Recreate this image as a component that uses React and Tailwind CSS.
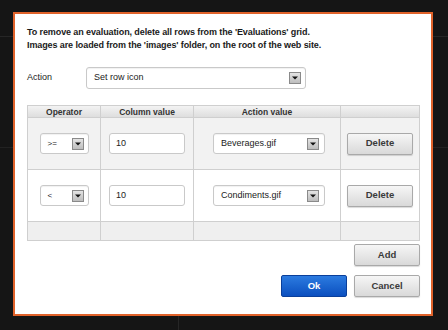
import React from "react";

const font = { fontFamily: "Arial, 'Liberation Sans', sans-serif" };

function DropBtn() {
  return (
    <span className="flex h-[12px] w-[12px] items-center justify-center border border-[#8a8a8a] bg-gradient-to-b from-[#e4e4e4] to-[#bdbdbd]">
      <svg width="6" height="4" viewBox="0 0 6 4">
        <path d="M0 0.5 L6 0.5 L3 3.5 Z" fill="#111" />
      </svg>
    </span>
  );
}

function Select({ text, className, textClass = "text-[9px]" }) {
  return (
    <div
      className={
        "flex items-center justify-between rounded-[3px] border border-[#c9c9c9] bg-white pl-[7px] pr-[4px] shadow-[inset_0_1px_1px_rgba(0,0,0,0.06)] " +
        className
      }
    >
      <span className={"text-[#222] " + textClass}>{text}</span>
      <DropBtn />
    </div>
  );
}

function Btn({ children, className }) {
  return (
    <div
      className={
        "flex items-center justify-center rounded-[2px] border border-[#a9a9a9] bg-gradient-to-b from-[#f6f6f6] to-[#d9d9d9] text-[9.5px] font-bold text-[#3a3a3a] shadow-[0_1px_1px_rgba(0,0,0,0.15)] " +
        className
      }
    >
      {children}
    </div>
  );
}

function Row({ op, value, action, bg }) {
  return (
    <div className={"flex h-[52px] border-b border-[#cfcfcf] " + bg}>
      <div className="flex w-[73px] items-center justify-center border-r border-[#cfcfcf]">
        <Select text={op} className="h-[21px] w-[49px] pr-[4px]" textClass="text-[8px]" />
      </div>
      <div className="flex w-[93px] items-center justify-center border-r border-[#cfcfcf]">
        <div className="flex h-[21px] w-[76px] items-center rounded-[3px] border border-[#c9c9c9] bg-white pl-[6px] text-[9px] text-[#222]">
          {value}
        </div>
      </div>
      <div className="flex w-[147px] items-center justify-center border-r border-[#cfcfcf] pl-[4px]">
        <Select text={action} className="h-[21px] w-[112px] pr-[5px]" />
      </div>
      <div className="flex flex-1 items-center justify-center">
        <Btn className="h-[22px] w-[66px]">Delete</Btn>
      </div>
    </div>
  );
}

export default function App() {
  return (
    <div className="relative h-[330px] w-[448px] overflow-hidden bg-[#151515]" style={font}>
      <div className="h-[37px] border-b border-[#262626]" />
      <div className="h-[111px] border-b border-[#222]" />
      <div className="absolute bottom-0 left-[178px] h-[14px] w-px bg-[#262626]" />
      <div className="absolute left-[13px] top-[12px] flex h-[304px] w-[420px] flex-col border-2 border-[#e0622a] bg-white pl-[12px] pr-[11px] pt-[12px]">
        <div className="text-[9px] font-bold leading-[13px] tracking-[-0.1px] text-[#1a1a1a]">
          <p>To remove an evaluation, delete all rows from the 'Evaluations' grid.</p>
          <p>Images are loaded from the 'images' folder, on the root of the web site.</p>
        </div>
        <div className="mt-[15px] flex h-[22px] items-center">
          <span className="w-[59px] text-[9px] text-[#222]">Action</span>
          <Select text="Set row icon" className="h-[22px] w-[220px] pr-[4px]" />
        </div>
        <div className="mt-[16px] border border-[#cfcfcf]">
          <div className="flex h-[12px] border-b border-[#cfcfcf] bg-gradient-to-b from-[#f3f3f3] to-[#dedede] text-[8.5px] font-bold leading-[12px] text-[#333]">
            <div className="w-[73px] border-r border-[#cfcfcf] text-center">Operator</div>
            <div className="w-[93px] border-r border-[#cfcfcf] text-center">Column value</div>
            <div className="w-[147px] border-r border-[#cfcfcf] text-center">Action value</div>
            <div className="flex-1" />
          </div>
          <Row op=">=" value="10" action="Beverages.gif" bg="bg-[#f2f2f2]" />
          <Row op="<" value="10" action="Condiments.gif" bg="bg-white" />
          <div className="flex h-[18px] bg-[#efefef]">
            <div className="w-[73px] border-r border-[#cfcfcf]" />
            <div className="w-[93px] border-r border-[#cfcfcf]" />
            <div className="w-[147px] border-r border-[#cfcfcf]" />
            <div className="flex-1" />
          </div>
        </div>
        <div className="mt-[3px] flex justify-end">
          <Btn className="h-[22px] w-[66px]">Add</Btn>
        </div>
        <div className="mt-[9px] flex justify-end gap-[7px]">
          <div className="flex h-[22px] w-[66px] items-center justify-center rounded-[2px] border border-[#0a3f9a] bg-gradient-to-b from-[#2c7be0] to-[#0b4fbf] text-[9.5px] font-bold text-white">
            Ok
          </div>
          <Btn className="h-[22px] w-[66px]">Cancel</Btn>
        </div>
      </div>
    </div>
  );
}
